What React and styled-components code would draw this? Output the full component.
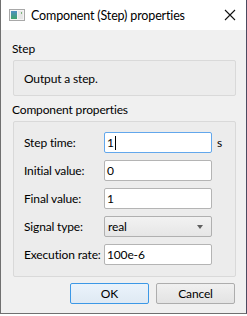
import React from "react";
import styled, { createGlobalStyle } from "styled-components";

const Global = createGlobalStyle`
  html, body { margin: 0; padding: 0; background: #ffffff; }
  body { font-family: Lato, "Noto Sans", sans-serif; font-size: 12px; letter-spacing: -0.15px; color: #000; }
  * { box-sizing: border-box; }
`;

const Window = styled.div`
  width: 247px;
  height: 314px;
  display: flex;
  flex-direction: column;
  border-left: 1px solid #707070;
  border-right: 1px solid #4b4a60;
  border-bottom: 1px solid #707070;
  background: #f0f0f0;
`;

const TitleBar = styled.div`
  height: 30px;
  background: #ffffff;
  display: flex;
  align-items: center;
  padding: 0 9px 0 8px;
  gap: 6px;
`;

const TitleText = styled.div`
  flex: 1;
  font-size: 12.5px;
  white-space: nowrap;
`;

const CloseBtn = styled.div`
  width: 12px;
  height: 12px;
  display: flex;
  margin-right: 1px;
`;

const Content = styled.div`
  flex: 1;
  display: flex;
  flex-direction: column;
  padding: 11px 10px 0 11px;
`;

const GroupLabel = styled.div`
  line-height: 16px;
  height: 16px;
  margin-bottom: 3px;
`;

const GroupBox = styled.div`
  margin-left: 1px;
  border: 1px solid #d9d9d9;
  border-radius: 2px;
  background: #ececec;
  padding: ${(p) => p.$pad};
  margin-bottom: ${(p) => p.$mb || 0}px;
`;

const Description = styled.div`
  height: 34px;
  display: flex;
  align-items: center;
`;

const Form = styled.div`
  display: grid;
  grid-template-columns: 80px 108px auto;
  row-gap: 7px;
  align-items: center;
`;

const Label = styled.div`
  white-space: nowrap;
`;

const Input = styled.div`
  height: 21px;
  border: 1px solid ${(p) => (p.$focused ? "#62a7ec" : "#b4b4b4")};
  border-radius: 2px;
  background: #ffffff;
  display: flex;
  align-items: center;
  padding-left: 2px;
  white-space: nowrap;
`;

const Caret = styled.span`
  display: inline-block;
  width: 1px;
  height: 14px;
  background: #000;
  margin-left: 1px;
`;

const Combo = styled.div`
  height: 21px;
  border: 1px solid #b0b0b0;
  border-radius: 2px;
  background: linear-gradient(#f2f2f2, #e6e6e6);
  display: flex;
  align-items: center;
  justify-content: space-between;
  padding: 0 8px 0 3px;
`;

const Arrow = styled.div`
  width: 0;
  height: 0;
  border-left: 3.5px solid transparent;
  border-right: 3.5px solid transparent;
  border-top: 4px solid #606060;
`;

const Unit = styled.div`
  padding-left: 5px;
`;

const ButtonRow = styled.div`
  display: flex;
  justify-content: flex-end;
  gap: 7px;
  padding-right: 1px;
`;

const Button = styled.div`
  width: 79px;
  height: 21px;
  border: 1px solid ${(p) => (p.$default ? "#3c98e6" : "#adadad")};
  border-radius: 2px;
  background: ${(p) => (p.$default ? "linear-gradient(#eaf3fb, #dfe9f3)" : "linear-gradient(#f0f0f0, #e3e3e3)")};
  display: flex;
  align-items: center;
  justify-content: center;
`;

const AppIcon = () => (
  <svg width="16" height="12" viewBox="0 0 16 12">
    <rect x="0.5" y="0.5" width="15" height="11" fill="#f4f4f4" stroke="#a8a8a8" />
    <defs>
      <linearGradient id="g" x1="0" y1="0" x2="0" y2="1">
        <stop offset="0" stopColor="#4f8fc4" />
        <stop offset="1" stopColor="#3fa36a" />
      </linearGradient>
    </defs>
    <rect x="2" y="2" width="6" height="8" fill="url(#g)" />
    <rect x="9" y="2" width="5" height="8" fill="#e6e6e6" />
    <rect x="12" y="3" width="1" height="2" fill="#7bb37b" />
  </svg>
);

const CloseIcon = () => (
  <svg width="12" height="12" viewBox="0 0 12 12">
    <path d="M1 1 L11 11 M11 1 L1 11" stroke="#111" strokeWidth="1.1" />
  </svg>
);

export default function App() {
  return (
    <>
      <Global />
      <Window>
        <TitleBar>
          <AppIcon />
          <TitleText>Component (Step) properties</TitleText>
          <CloseBtn>
            <CloseIcon />
          </CloseBtn>
        </TitleBar>
        <Content>
          <GroupLabel>Step</GroupLabel>
          <GroupBox $pad="0 10px" $mb={6}>
            <Description>Output a step.</Description>
          </GroupBox>
          <GroupLabel>Component properties</GroupLabel>
          <GroupBox $pad="10px 10px 11px 10px" $mb={6}>
            <Form>
              <Label>Step time:</Label>
              <Input $focused>
                1<Caret />
              </Input>
              <Unit>s</Unit>
              <Label>Initial value:</Label>
              <Input>0</Input>
              <span />
              <Label>Final value:</Label>
              <Input>1</Input>
              <span />
              <Label>Signal type:</Label>
              <Combo>
                <span>real</span>
                <Arrow />
              </Combo>
              <span />
              <Label>Execution rate:</Label>
              <Input>100e-6</Input>
              <span />
            </Form>
          </GroupBox>
          <ButtonRow>
            <Button $default>OK</Button>
            <Button>Cancel</Button>
          </ButtonRow>
        </Content>
      </Window>
    </>
  );
}
